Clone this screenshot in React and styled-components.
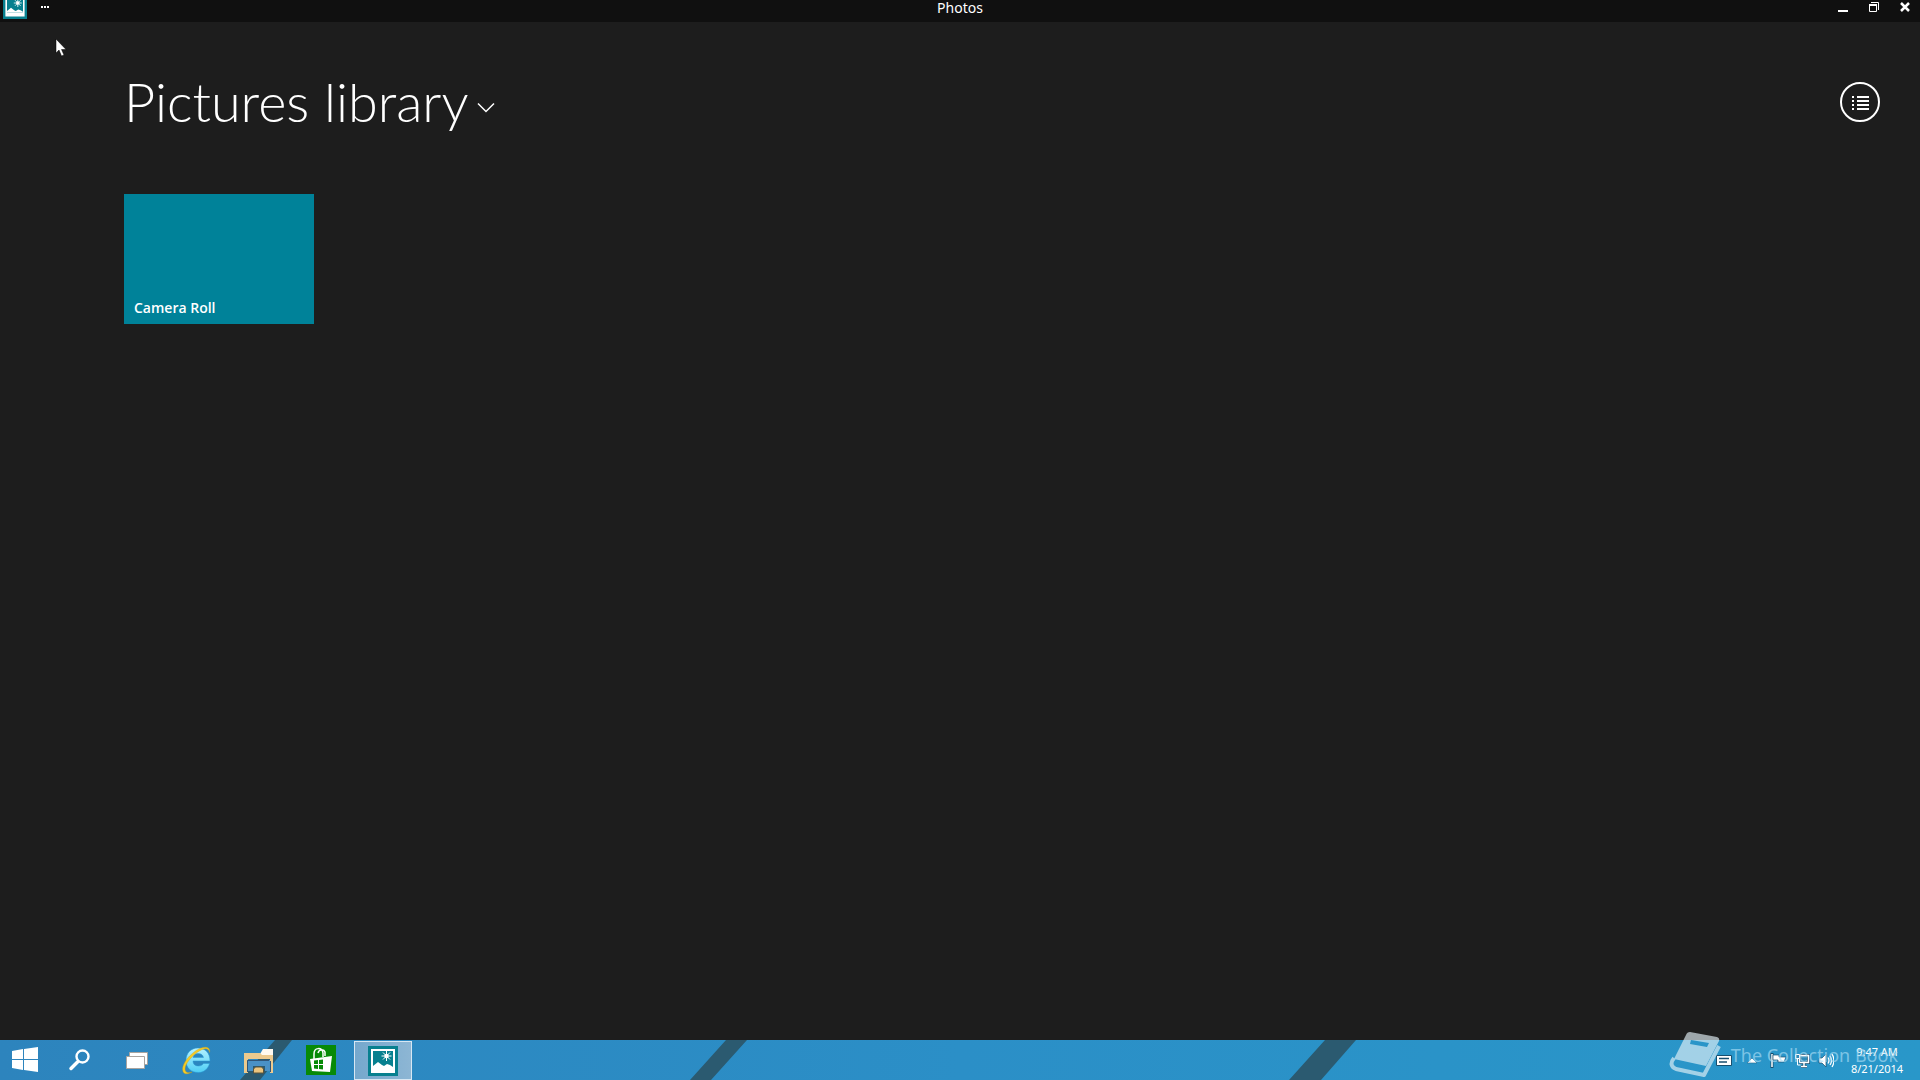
import React from "react";
import styled, { createGlobalStyle } from "styled-components";

const GlobalStyle = createGlobalStyle`
  * { box-sizing: border-box; }
  body {
    margin: 0;
    background: #1d1d1d;
    color: #fff;
    font-family: "Open Sans", "Noto Sans", sans-serif;
    overflow: hidden;
  }
  button { font: inherit; color: inherit; border: 0; padding: 0; background: none; }
  svg { display: block; flex: none; }
`;

const Screen = styled.div`
  display: flex;
  flex-direction: column;
  height: 100vh;
`;

const TitleBar = styled.header`
  display: grid;
  grid-template-columns: 1fr auto 1fr;
  grid-template-rows: 22px;
  height: 22px;
  flex: none;
  background: #101010;
  overflow: hidden;
`;

const TitleLeft = styled.div`
  display: flex;
  align-items: flex-end;
  gap: 8px;
  height: 22px;
  padding: 0 0 3px 3px;
`;

const TitleText = styled.span`
  font-family: "Noto Sans", sans-serif;
  font-size: 14px;
  line-height: 16px;
`;

const TitleRight = styled.div`
  display: flex;
  justify-content: flex-end;
  align-items: flex-start;
  gap: 11px;
  padding: 0 5px 0 0;
`;

const WindowButton = styled.button`
  width: 20px;
  height: 16px;
  flex: none;
  display: flex;
  justify-content: center;
`;

const Content = styled.main`
  flex: 1;
  display: flex;
  flex-direction: column;
  padding: 40px 40px 0 124px;
`;

const Heading = styled.div`
  display: flex;
  justify-content: space-between;
  align-items: center;
  height: 80px;
`;

const LibraryButton = styled.button`
  display: flex;
  align-items: center;
  gap: 8px;
`;

const LibraryTitle = styled.h1`
  margin: 0;
  font-family: Lato, "Open Sans", sans-serif;
  font-size: 54px;
  line-height: 80px;
  font-weight: 300;
`;

const Chevron = styled.svg`
  margin-top: 12px;
`;

const ViewButton = styled.button`
  width: 40px;
  height: 40px;
`;

const Tiles = styled.div`
  display: flex;
  gap: 8px;
  padding-top: 52px;
`;

const Tile = styled.button`
  display: flex;
  align-items: flex-end;
  width: 190px;
  height: 130px;
  padding: 6px 10px;
  background: #008299;
  font-size: 14px;
  line-height: 20px;
  font-weight: 600;
  text-align: left;
`;

const Taskbar = styled.footer`
  position: relative;
  display: flex;
  justify-content: space-between;
  height: 40px;
  flex: none;
  background: linear-gradient(90deg, #2d84bd, #2b8fc7 50%, #2997c9);
`;

const Wallpaper = styled.svg`
  position: absolute;
  inset: 0;
  width: 100%;
  height: 100%;
`;

const TaskGroup = styled.nav`
  position: relative;
  display: flex;
`;

const TaskButton = styled.button`
  display: flex;
  align-items: center;
  justify-content: center;
  width: ${(p) => p.$width}px;
  height: 40px;
`;

const ActiveTask = styled(TaskButton)`
  margin-left: 2px;
  height: 39px;
  align-self: flex-end;
  background: linear-gradient(90deg, #75a8cd, #8db6d4);
  border: 1px solid #d7e7f3;
`;

const Tray = styled.div`
  position: relative;
  display: flex;
  align-items: center;
  gap: 8px;
  padding-right: 16px;
`;

const TrayButton = styled.button`
  display: flex;
  justify-content: center;
  width: ${(p) => (p.$wide ? 20 : 16)}px;
  height: 16px;
`;

const Clock = styled.button`
  width: 54px;
  margin-left: 8px;
  font-family: "Noto Sans", sans-serif;
  font-size: 11px;
  line-height: 17px;
  text-align: center;
  white-space: nowrap;
  span { display: block; }
`;

const Watermark = styled.div`
  position: absolute;
  right: 22px;
  bottom: 0;
  display: flex;
  align-items: center;
  gap: 10px;
  height: 50px;
  color: #a9ddf5;
  opacity: 0.65;
  pointer-events: none;
  font-family: "Noto Sans", sans-serif;
  font-size: 18px;
  line-height: 24px;
  white-space: nowrap;
`;

const Cursor = styled.svg`
  position: absolute;
  left: 55px;
  top: 38px;
`;

function PhotosIcon({ size }) {
  return (
    <svg width={size} height={size} viewBox="0 0 30 30" aria-hidden="true">
      <path fill="#07808f" d="M0 0h30v30H0z" />
      <path fill="#fff" fillRule="evenodd" d="M3 3h24v24H3zM5 5v17h20V5z" />
      <path fill="#fff" d="M5 22v-2l5-4 4 3 2 1 3-2 3 1 3 2v1z" />
      <circle cx="18.500" cy="10" r="2.200" fill="#fff" />
      <path stroke="#fff" strokeWidth="1" d="M18.500 5v10M13.500 10h10M15 6.500l7 7M22 6.500l-7 7" />
    </svg>
  );
}

const tasks = [
  {
    name: "Start", width: 50,
    icon: (
      <svg width="28" height="28" viewBox="0 0 28 28">
        <path fill="#fff" d="M1 5l11-2v10H1zM13 3l14-2v12H13zM1 14h11v10L1 22zM13 14h14v12l-14-2z" />
      </svg>
    ),
  },
  {
    name: "Search", width: 58,
    icon: (
      <svg width="24" height="24" viewBox="0 0 24 24" fill="none" stroke="#fff" strokeLinecap="round">
        <circle cx="15.500" cy="8.500" r="6" strokeWidth="2.400" />
        <path strokeWidth="3.500" d="M10.500 14L4 20.500" />
      </svg>
    ),
  },
  {
    name: "Task view", width: 58,
    icon: (
      <svg width="24" height="20" viewBox="0 0 24 20" fill="#fff" stroke="#a8a4a0">
        <path d="M4.500 2.500h18v12h-18z" />
        <path d="M1.500 6.500h18v12h-18z" />
      </svg>
    ),
  },
  {
    name: "Internet Explorer", width: 62,
    icon: (
      <svg width="32" height="32" viewBox="0 0 32 32" fill="none">
        <defs>
          <linearGradient id="ieBlue" x1="0" y1="0" x2="0" y2="1">
            <stop offset="0" stopColor="#b5f1ff" />
            <stop offset="1" stopColor="#4fcff5" />
          </linearGradient>
        </defs>
        <path fill="url(#ieBlue)" stroke="#299bd6" strokeWidth=".5" fillRule="evenodd" d="M17 4c7 0 12 5 12 13H12c0 3 2 5 5.500 5 2.500 0 4-1 5-2.500h6C27 25 23 28.500 17.500 28.500 10 28.500 5 24 5 16.500S10 4 17 4zM12 13.500h10.500C22 11 20 9.500 17 9.500s-4.500 1.500-5 4z" />
        <path fill="#f6cb24" stroke="#c99e19" strokeWidth=".4" d="M28.500 8.500C30 2 22 1.500 14.500 7 6 13 0 22 2 27.500c1 3 5 3 9 .5-4 1.500-7 .5-7-3 0-5 6-12 12-16.500 6-4.500 12-5.500 12.500 0z" />
      </svg>
    ),
  },
  {
    name: "File Explorer", width: 62,
    icon: (
      <svg width="32" height="30" viewBox="0 0 32 30">
        <path fill="#e7bd77" d="M1 8h16v6H1z" />
        <path fill="#fffaf0" d="M17 9l3-5h10v9H17z" />
        <path fill="#ecca8e" d="M1 8h16l2 2h11v18h-3V14H5v14H1z" />
        <path fill="#4a91c6" d="M4 15h23v11h-5v-5H10v5H4z" />
        <path fill="none" stroke="#315577" d="M4.500 27V15.500H26M27.500 16v11" />
        <path fill="#edc57e" stroke="#5c543b" d="M10.500 28v-4l2-2h6l2 2v4z" />
      </svg>
    ),
  },
  {
    name: "Store", width: 62,
    icon: (
      <svg width="30" height="30" viewBox="0 0 30 30">
        <path fill="#078a07" d="M0 0h30v30H0z" />
        <path fill="none" stroke="#fff" strokeWidth="1.500" d="M8 14V9c0-7 8-7 9-1v4M12 8c1-4 6-4 7-1v4" />
        <path fill="#fff" d="M4 14l22-3-2 16-18-1z" />
        <path fill="#078a07" d="M8 15.500l4-.500v4H8zM13 15l4-.500V19h-4zM8 20h4v4l-4-.500zM13 20h4v4.500l-4-.500z" />
      </svg>
    ),
  },
];

const trayItems = [
  { name: "Touch keyboard", wide: true, icon: <><path fill="#fff" stroke="#174f6f" d="M.5 3.500h15v10H.5z" /><path stroke="#174f6f" strokeWidth="1.500" d="M3 6.500h10M3 10h8" /></> },
  { name: "Show hidden icons", wide: true, icon: <path fill="#fff" stroke="#2a7499" strokeWidth=".7" d="M3 11l5-5 5 5z" /> },
  { name: "Action center", icon: <><path fill="none" stroke="#174f6f" strokeWidth="3" d="M2 1v15" /><path stroke="#fff" strokeWidth="1.500" d="M2 2v13" /><path fill="#fff" stroke="#174f6f" strokeWidth=".7" d="M3 3h6v2h7l-2 5H8V8H3z" /></> },
  { name: "Network", icon: <><path fill="#2c8ab7" stroke="#174f6f" strokeWidth="3" d="M5.500 3.500h9v7h-9zM10 11v3M7 14.500h6" /><path fill="none" stroke="#fff" strokeWidth="1.500" d="M5.500 3.500h9v7h-9zM10 11v3M7 14.500h6" /><path fill="#2c8ab7" stroke="#fff" d="M1.500 2.500h4v4h-4zM3.500 7v6h3" /></> },
  { name: "Volume", icon: <><path fill="#fff" stroke="#174f6f" strokeWidth=".7" d="M1 6h3l4-4v13l-4-4H1z" /><path fill="none" stroke="#fff" strokeWidth="1.300" d="M10 5.500q2 3 0 6M12 4q3 4.500 0 9M14 2q4 6.500 0 13" /></> },
];

export default function App() {
  return (
    <Screen>
      <GlobalStyle />
      <TitleBar>
        <TitleLeft>
          <PhotosIcon size={24} />
          <WindowButton aria-label="App commands">
            <svg width="10" height="16"><path fill="#fff" d="M1 3h2v2H1zM4 3h2v2H4zM7 3h2v2H7z" /></svg>
          </WindowButton>
        </TitleLeft>
        <TitleText>Photos</TitleText>
        <TitleRight>
          <WindowButton aria-label="Minimize">
            <svg width="12" height="16"><path fill="#fff" d="M1 10h10v2H1z" /></svg>
          </WindowButton>
          <WindowButton aria-label="Restore">
            <svg width="12" height="16" fill="none" stroke="#fff"><path d="M3 2.500h7.500V10" /><path d="M1.500 5v6.500h7V5" /><path strokeWidth="2" d="M1 5h8" /></svg>
          </WindowButton>
          <WindowButton aria-label="Close">
            <svg width="12" height="16" fill="none" stroke="#fff" strokeWidth="2.500"><path d="M2 3l8 8M10 3l-8 8" /></svg>
          </WindowButton>
        </TitleRight>
      </TitleBar>
      <Content>
        <Heading>
          <LibraryButton>
            <LibraryTitle>Pictures library</LibraryTitle>
            <Chevron width="18" height="12" fill="none" stroke="#fff" strokeWidth="1.500"><path d="M1 1.500l8 8 8-8" /></Chevron>
          </LibraryButton>
          <ViewButton aria-label="Details view">
            <svg width="40" height="40"><circle cx="20" cy="20" r="19" fill="none" stroke="#fff" strokeWidth="2" /><path fill="#fff" d="M12 14h2v2h-2zM17 14h12v2H17zM12 18h2v2h-2zM17 18h12v2H17zM12 22h2v2h-2zM17 22h12v2H17zM12 26h2v2h-2zM17 26h12v2H17z" /></svg>
          </ViewButton>
        </Heading>
        <Tiles><Tile>Camera Roll</Tile></Tiles>
      </Content>
      <Taskbar>
        <Wallpaper viewBox="0 0 1920 40" preserveAspectRatio="none" aria-hidden="true">
          <path fill="#2b5a70" d="M275 0h17l-32 40h-20zM726 0h21l-36 40h-21zM1325 0h31l-35 40h-32z" />
        </Wallpaper>
        <TaskGroup aria-label="Taskbar">
          {tasks.map((t) => (
            <TaskButton key={t.name} $width={t.width} aria-label={t.name}>{t.icon}</TaskButton>
          ))}
          <ActiveTask $width={58} aria-label="Photos"><PhotosIcon size={30} /></ActiveTask>
        </TaskGroup>
        <Tray>
          {trayItems.map((t) => (
            <TrayButton key={t.name} $wide={t.wide} aria-label={t.name}>
              <svg width="16" height="16" viewBox="0 0 16 16">{t.icon}</svg>
            </TrayButton>
          ))}
          <Clock><span>9:47 AM</span><span>8/21/2014</span></Clock>
        </Tray>
        <Watermark>
          <svg width="52" height="48" viewBox="0 0 52 48" aria-hidden="true">
            <path fill="#e4f1f8" fillRule="evenodd" d="M21 1l27 5q3 1 2 4L37 35 5 28 17 4q1-3 4-3zM22 9l-1 4 17 3 2-4z" />
            <path fill="none" stroke="#e4f1f8" strokeWidth="4" strokeLinejoin="round" d="M5 27c-4 5-3 9 2 11l28 6L50 15" />
          </svg>
          <span>The Collection Book</span>
        </Watermark>
      </Taskbar>
      <Cursor width="12" height="19" viewBox="0 0 12 19" aria-hidden="true">
        <path fill="#fff" stroke="#000" strokeWidth=".5" d="M1 1v14l3-3 2.500 6 2.500-1-2.500-5.500H11z" />
      </Cursor>
    </Screen>
  );
}
